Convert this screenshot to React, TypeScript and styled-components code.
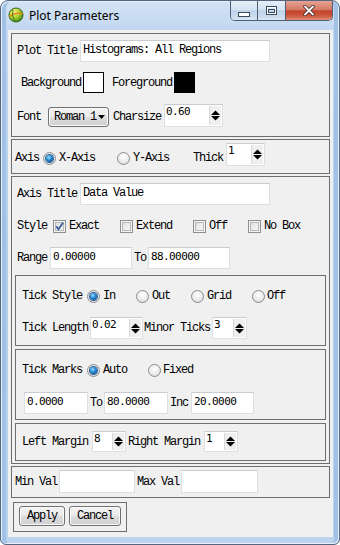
import React from "react";
import styled, { createGlobalStyle } from "styled-components";

const GlobalStyle = createGlobalStyle`
  html, body { margin: 0; padding: 0; background: #ffffff; }
  #root { width: 340px; height: 545px; }
`;

const ui = `"Liberation Mono", "DejaVu Sans Mono", monospace`;
const digits = `"DejaVu Sans Mono", "Liberation Mono", monospace`;

const Window = styled.div`
  box-sizing: border-box;
  width: 340px;
  height: 545px;
  display: flex;
  flex-direction: column;
  border: 1px solid #55677f;
  border-radius: 8px 8px 6px 6px;
  padding: 0 6px 7px 7px;
  background: linear-gradient(180deg, #d3e3f5 0%, #c3d8f0 5%, #b6cee9 50%, #bcd3ee 100%);
  box-shadow: inset 1px 1px 0 #e6effa, inset -1px -1px 0 #e6effa, inset 5px 0 0 #a2c1e6,
    inset -5px 0 0 #a2c1e6;
`;

const TitleBar = styled.div`
  height: 29px;
  flex-shrink: 0;
  display: flex;
  align-items: flex-start;
`;

const AppIcon = styled.svg`
  margin-top: 6px;
  width: 16px;
  height: 16px;
  flex-shrink: 0;
`;

const Caption = styled.span`
  margin: 7px 0 0 5px;
  font-family: "Noto Sans", "Open Sans", sans-serif;
  font-size: 12px;
  line-height: 16px;
  color: #000;
`;

const CaptionButtons = styled.div`
  margin-left: auto;
  display: flex;
  height: 19px;
  border: 1px solid #4f5d72;
  border-top: none;
  border-radius: 0 0 5px 5px;
  overflow: hidden;
`;

const CaptionButton = styled.div<{ $w: number; $close?: boolean; $pt: number }>`
  width: ${(p) => p.$w}px;
  display: flex;
  justify-content: center;
  align-items: flex-start;
  padding-top: ${(p) => p.$pt}px;
  box-sizing: border-box;
  border-left: 1px solid #4f5d72;
  &:first-child { border-left: none; }
  background: ${(p) =>
    p.$close
      ? "linear-gradient(180deg, #e6a394 0%, #d47a66 45%, #c3412b 52%, #cc5a40 80%, #e0927a 100%)"
      : "linear-gradient(180deg, #e6eef8 0%, #d4e2f2 45%, #bfd3ea 52%, #c9dbef 80%, #dce8f6 100%)"};
`;

const Client = styled.div`
  flex: 1;
  display: flex;
  flex-direction: column;
  background: #f0f0f0;
  padding: 3px 3px 0 3px;
`;

const Group = styled.div<{ $pt: number; $pb: number; $px?: number; $mt?: number; $ml?: number; $fit?: boolean }>`
  box-sizing: border-box;
  display: flex;
  flex-direction: column;
  flex-shrink: 0;
  border: 1px solid #6e6e6e;
  padding: ${(p) => p.$pt}px ${(p) => p.$px ?? 0}px ${(p) => p.$pb}px;
  margin-top: ${(p) => p.$mt ?? 0}px;
  margin-left: ${(p) => p.$ml ?? 0}px;
  align-self: ${(p) => (p.$fit ? "flex-start" : "stretch")};
`;

const Row = styled.div<{ $h: number; $mt?: number; $pl?: number }>`
  display: flex;
  align-items: center;
  flex-shrink: 0;
  height: ${(p) => p.$h}px;
  margin-top: ${(p) => p.$mt ?? 0}px;
  padding-left: ${(p) => p.$pl ?? 0}px;
`;

const Label = styled.span<{ $ml?: number }>`
  margin-left: ${(p) => p.$ml ?? 0}px;
  font-family: ${ui};
  font-size: 12px;
  letter-spacing: -1.2px;
  line-height: 14px;
  color: #000;
  white-space: pre;
  flex-shrink: 0;
`;

const TextField = styled.div<{ $w: number; $h?: number; $ml?: number; $num?: boolean }>`
  box-sizing: border-box;
  flex-shrink: 0;
  width: ${(p) => p.$w}px;
  height: ${(p) => p.$h ?? 22}px;
  margin-left: ${(p) => p.$ml ?? 0}px;
  padding: 0 2px;
  background: #fff;
  border: 1px solid #dcdfe4;
  border-top-color: #c9ccd2;
  font-family: ${(p) => (p.$num ? digits : ui)};
  font-size: ${(p) => (p.$num ? 11 : 12)}px;
  letter-spacing: ${(p) => (p.$num ? -0.6 : -1.2)}px;
  line-height: ${(p) => (p.$h ?? 22) - 4}px;
  color: #000;
  white-space: pre;
  overflow: hidden;
`;

const Spin = styled.div<{ $w: number; $h?: number; $ml?: number; $top?: boolean }>`
  box-sizing: border-box;
  flex-shrink: 0;
  display: flex;
  width: ${(p) => p.$w}px;
  height: ${(p) => p.$h ?? 22}px;
  margin-left: ${(p) => p.$ml ?? 0}px;
  align-self: ${(p) => (p.$top ? "flex-start" : "auto")};
  background: #fff;
  border: 1px solid #dcdfe4;
  border-top-color: #c9ccd2;
`;

const SpinText = styled.span`
  flex: 1;
  padding-left: 1px;
  font-family: ${digits};
  font-size: 11px;
  letter-spacing: -0.6px;
  line-height: 13px;
  color: #000;
`;

const SpinArrows = styled.div`
  width: 11px;
  margin: 1px 1px 1px 0;
  display: flex;
  align-items: center;
  justify-content: center;
  background: #efefef;
  border-left: 1px solid #d9d9d9;
`;

const Swatch = styled.div<{ $color: string; $ml?: number }>`
  box-sizing: border-box;
  flex-shrink: 0;
  width: 21px;
  height: 21px;
  margin-left: ${(p) => p.$ml ?? 0}px;
  background: ${(p) => p.$color};
  border: 1px solid #000;
`;

const winButton = `
  box-sizing: border-box;
  display: flex;
  align-items: center;
  flex-shrink: 0;
  height: 20px;
  border: 1px solid #707070;
  border-radius: 3px;
  background: linear-gradient(180deg, #f2f2f2 0%, #ebebeb 45%, #dddddd 52%, #cfcfcf 100%);
  box-shadow: inset 0 0 0 1px #fbfbfb;
  font-family: ${ui};
  font-size: 12px;
  letter-spacing: -1.2px;
  color: #000;
  white-space: pre;
`;

const Dropdown = styled.div<{ $ml?: number }>`
  ${winButton}
  width: 61px;
  margin-left: ${(p) => p.$ml ?? 0}px;
  padding-left: 5px;
  svg { margin-left: 2px; }
`;

const PushButton = styled.div<{ $w: number; $ml?: number }>`
  ${winButton}
  justify-content: center;
  width: ${(p) => p.$w}px;
  margin-left: ${(p) => p.$ml ?? 0}px;
`;

const RadioDot = styled.span<{ $on?: boolean; $ml?: number }>`
  position: relative;
  box-sizing: border-box;
  flex-shrink: 0;
  width: 13px;
  height: 13px;
  margin-left: ${(p) => p.$ml ?? 0}px;
  border-radius: 50%;
  border: 1px solid #8b8c8d;
  background: radial-gradient(circle at 50% 35%, #ffffff 0%, #ececec 55%, #d0d0d0 100%);
  &::after {
    content: "";
    position: absolute;
    left: 2px;
    top: 2px;
    width: 7px;
    height: 7px;
    border-radius: 50%;
    display: ${(p) => (p.$on ? "block" : "none")};
    background: radial-gradient(circle at 40% 35%, #9fe0ff 0%, #2a8fd8 40%, #0c4f96 80%);
    box-shadow: 0 0 0 1px #2b5b8e;
  }
`;

const CheckBox = styled.span<{ $ml?: number }>`
  box-sizing: border-box;
  flex-shrink: 0;
  display: flex;
  width: 13px;
  height: 13px;
  margin-left: ${(p) => p.$ml ?? 0}px;
  border: 1px solid #8e8f8f;
  background: linear-gradient(135deg, #d6d8db 0%, #f0f0f0 60%, #fbfbfb 100%);
  box-shadow: inset 0 0 0 1px #f5f5f5, inset 0 0 0 2px #b4b8bd;
`;

function Arrows() {
  return (
    <SpinArrows>
      <svg width="9" height="13" viewBox="0 0 9 13">
        <polygon points="0,6 4.5,1.5 9,6" fill="#000" />
        <polygon points="0,7 9,7 4.5,11.5" fill="#000" />
      </svg>
    </SpinArrows>
  );
}

function SpinBox(props: { w: number; h?: number; ml?: number; top?: boolean; value: string }) {
  return (
    <Spin $w={props.w} $h={props.h} $ml={props.ml} $top={props.top}>
      <SpinText>{props.value}</SpinText>
      <Arrows />
    </Spin>
  );
}

function Check(props: { on?: boolean; ml?: number }) {
  return (
    <CheckBox $ml={props.ml}>
      {props.on && (
        <svg width="11" height="11" viewBox="0 0 11 11">
          <path d="M2.2 5.4 L4.5 8.2 L9 1.8" fill="none" stroke="#3b5898" strokeWidth="1.8" />
        </svg>
      )}
    </CheckBox>
  );
}

export default function App() {
  return (
    <>
      <GlobalStyle />
      <Window>
        <TitleBar>
          <AppIcon viewBox="0 0 16 16">
            <defs>
              <radialGradient id="globe" cx="0.35" cy="0.3" r="0.8">
                <stop offset="0" stopColor="#fbf38a" />
                <stop offset="0.45" stopColor="#b5d636" />
                <stop offset="1" stopColor="#2f7a19" />
              </radialGradient>
            </defs>
            <circle cx="8" cy="8" r="7" fill="url(#globe)" stroke="#2c6414" strokeWidth="1" />
            <path d="M1.5 9.5 Q8 4.5 14.5 7" fill="none" stroke="#e58a1c" strokeWidth="1.6" />
            <path d="M5 2.5 Q3 8 7 14.5" fill="none" stroke="#3d7a1d" strokeWidth="1" />
          </AppIcon>
          <Caption>Plot Parameters</Caption>
          <CaptionButtons>
            <CaptionButton $w={26} $pt={11}>
              <svg width="12" height="5" viewBox="0 0 12 5">
                <rect x="0.5" y="0.5" width="11" height="4" fill="#fff" stroke="#3b4a5e" />
              </svg>
            </CaptionButton>
            <CaptionButton $w={28} $pt={5}>
              <svg width="11" height="9" viewBox="0 0 11 9">
                <rect x="0.5" y="0.5" width="10" height="8" fill="none" stroke="#3b4a5e" />
                <rect x="1.5" y="1.5" width="8" height="6" fill="none" stroke="#fff" />
                <rect x="2.5" y="3.5" width="6" height="3" fill="none" stroke="#3b4a5e" />
              </svg>
            </CaptionButton>
            <CaptionButton $w={47} $pt={4} $close>
              <svg width="12" height="11" viewBox="0 0 12 11">
                <path d="M2 1.5 L10 9.5 M10 1.5 L2 9.5" stroke="#3a2020" strokeWidth="3.4" strokeLinecap="round" />
                <path d="M2 1.5 L10 9.5 M10 1.5 L2 9.5" stroke="#fff" strokeWidth="1.8" strokeLinecap="round" />
              </svg>
            </CaptionButton>
          </CaptionButtons>
        </TitleBar>

        <Client>
          {/* plot title, colours, font */}
          <Group $pt={6} $pb={6}>
            <Row $h={22} $pl={5}>
              <Label>Plot Title</Label>
              <TextField $w={190} $ml={3}>Histograms: All Regions</TextField>
            </Row>
            <Row $h={21} $mt={10} $pl={5}>
              <Label $ml={4}>Background</Label>
              <Swatch $color="#ffffff" $ml={2} />
              <Label $ml={8}>Foreground</Label>
              <Swatch $color="#000000" $ml={2} />
            </Row>
            <Row $h={26} $mt={11} $pl={5}>
              <Label>Font</Label>
              <Dropdown $ml={7}>
                Roman 1
                <svg width="7" height="4" viewBox="0 0 7 4">
                  <polygon points="0,0 7,0 3.5,4" fill="#000" />
                </svg>
              </Dropdown>
              <Label $ml={4}>Charsize</Label>
              <SpinBox w={59} h={23} ml={3} top value="0.60" />
            </Row>
          </Group>

          {/* axis choice */}
          <Group $mt={2} $pt={3} $pb={0}>
            <Row $h={30} $pl={3}>
              <Label>Axis</Label>
              <RadioDot $on $ml={4} />
              <Label $ml={3}>X-Axis</Label>
              <RadioDot $ml={22} />
              <Label $ml={3}>Y-Axis</Label>
              <Label $ml={24}>Thick</Label>
              <SpinBox w={39} h={23} ml={3} top value="1" />
            </Row>
          </Group>

          {/* axis settings */}
          <Group $mt={2} $pt={6} $pb={2} $px={3}>
            <Row $h={22} $pl={2}>
              <Label>Axis Title</Label>
              <TextField $w={190} $ml={3}>Data Value</TextField>
            </Row>
            <Row $h={22} $mt={10} $pl={2}>
              <Label>Style</Label>
              <Check on ml={6} />
              <Label $ml={3}>Exact</Label>
              <Check ml={21} />
              <Label $ml={3}>Extend</Label>
              <Check ml={21} />
              <Label $ml={3}>Off</Label>
              <Check ml={21} />
              <Label $ml={3}>No Box</Label>
            </Row>
            <Row $h={22} $mt={10} $pl={2}>
              <Label>Range</Label>
              <TextField $w={82} $ml={3} $num>0.00000</TextField>
              <Label $ml={2}>To</Label>
              <TextField $w={82} $ml={2} $num>88.00000</TextField>
            </Row>

            <Group $mt={6} $pt={9} $pb={6}>
              <Row $h={22} $pl={6}>
                <Label>Tick Style</Label>
                <RadioDot $on $ml={5} />
                <Label $ml={3}>In</Label>
                <RadioDot $ml={21} />
                <Label $ml={3}>Out</Label>
                <RadioDot $ml={21} />
                <Label $ml={3}>Grid</Label>
                <RadioDot $ml={21} />
                <Label $ml={2}>Off</Label>
              </Row>
              <Row $h={22} $mt={10} $pl={6}>
                <Label>Tick Length</Label>
                <SpinBox w={53} ml={2} value="0.02" />
                <Label $ml={1}>Minor Ticks</Label>
                <SpinBox w={35} ml={2} value="3" />
              </Row>
            </Group>

            <Group $mt={3} $pt={9} $pb={5}>
              <Row $h={22} $pl={6}>
                <Label>Tick Marks</Label>
                <RadioDot $on $ml={5} />
                <Label $ml={3}>Auto</Label>
                <RadioDot $ml={21} />
                <Label $ml={2}>Fixed</Label>
              </Row>
              <Row $h={22} $mt={11} $pl={8}>
                <TextField $w={64} $num>0.0000</TextField>
                <Label $ml={2}>To</Label>
                <TextField $w={64} $ml={2} $num>80.0000</TextField>
                <Label $ml={2}>Inc</Label>
                <TextField $w={63} $ml={3} $num>20.0000</TextField>
              </Row>
            </Group>

            <Group $mt={3} $pt={7} $pb={8}>
              <Row $h={21} $pl={6}>
                <Label>Left Margin</Label>
                <SpinBox w={34} h={21} ml={4} value="8" />
                <Label $ml={2}>Right Margin</Label>
                <SpinBox w={34} h={21} ml={4} value="1" />
              </Row>
            </Group>
          </Group>

          {/* value limits */}
          <Group $mt={2} $pt={3} $pb={4}>
            <Row $h={23} $pl={3}>
              <Label>Min Val</Label>
              <TextField $w={76} $h={23} $ml={2} />
              <Label $ml={2}>Max Val</Label>
              <TextField $w={77} $h={23} $ml={2} />
            </Row>
          </Group>

          {/* actions */}
          <Group $mt={4} $ml={2} $pt={3} $pb={5} $px={5} $fit>
            <Row $h={20}>
              <PushButton $w={46}>Apply</PushButton>
              <PushButton $w={52} $ml={4}>Cancel</PushButton>
            </Row>
          </Group>
        </Client>
      </Window>
    </>
  );
}
